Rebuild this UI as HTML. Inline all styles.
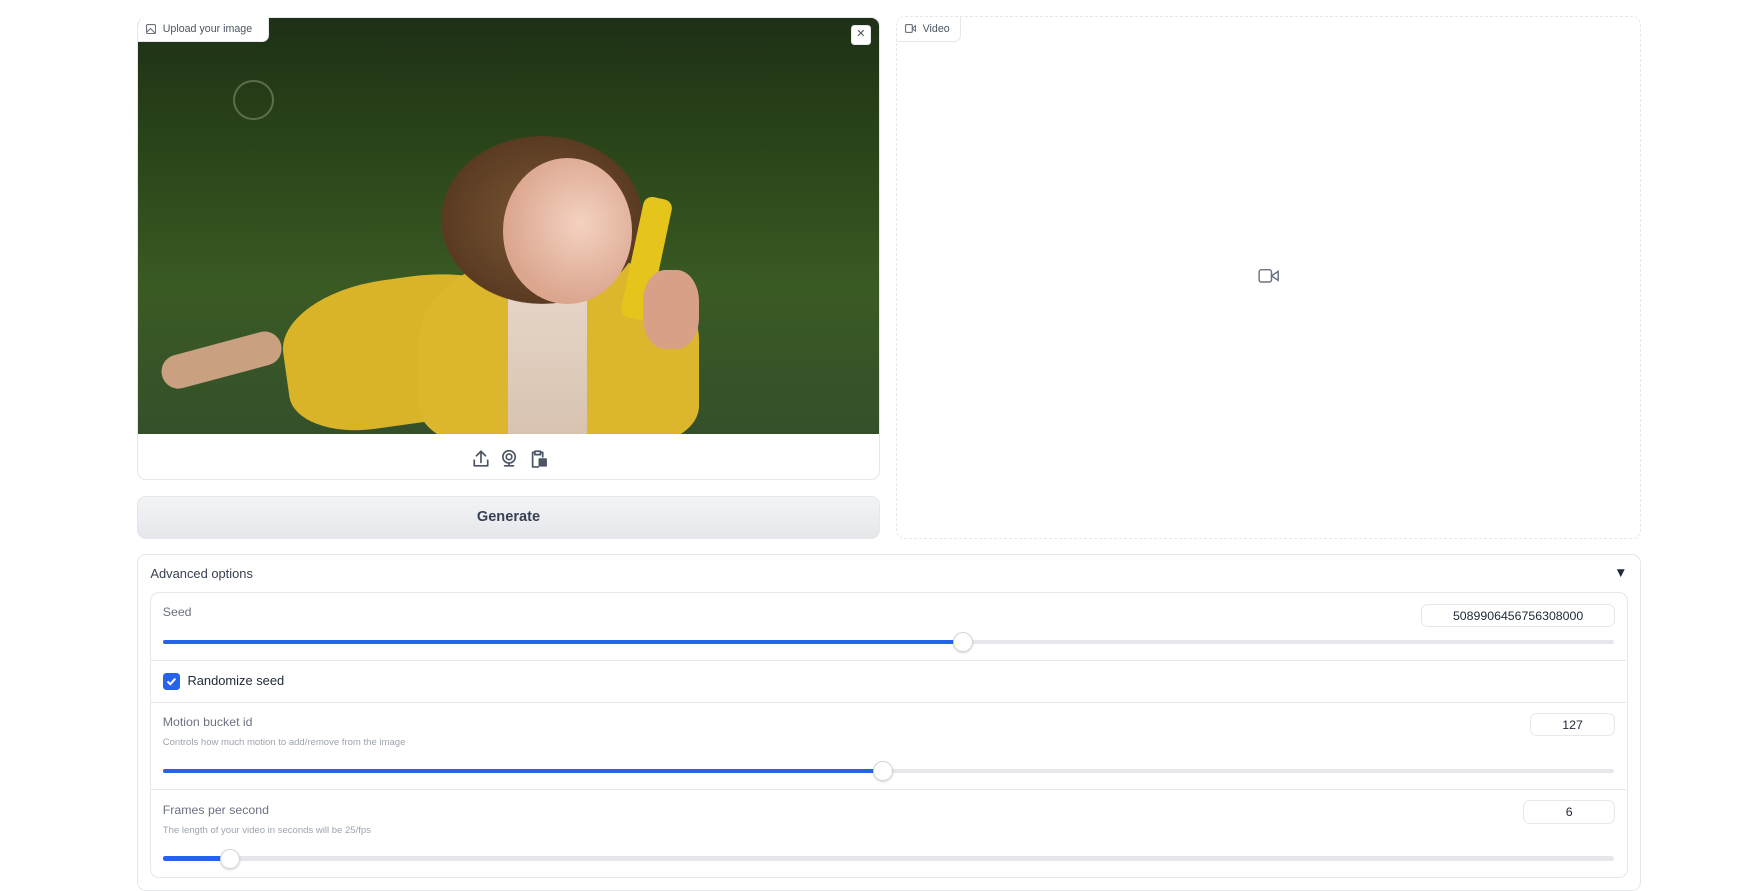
<!DOCTYPE html>
<html><head><meta charset="utf-8"><style>
*{box-sizing:border-box;margin:0;padding:0}
html,body{width:1760px;height:880px;overflow:hidden;background:#fff}
#w{position:absolute;left:0;top:0;width:1568px;height:784px;zoom:1.12245;font-family:"Liberation Sans",sans-serif;color:#374151}
.abs{position:absolute}
.lbl{position:absolute;background:#fff;border:1px solid #e5e7eb;border-top:none;border-left:none;border-radius:0 0 6px 0;font-size:9.5px;color:#4b5563;display:flex;align-items:center;gap:6px;padding:0 7px;white-space:nowrap}
.track{position:absolute;height:4px;background:#e5e7eb;border-radius:2px;left:145px;width:1293px}
.fill{position:absolute;left:0;top:0;height:4px;background:#2563eb;border-radius:2px}
.thumb{position:absolute;top:-7px;width:18px;height:18px;border-radius:50%;background:#fff;border:1px solid #d1d5db;box-shadow:0 1px 2px rgba(0,0,0,.15)}
.num{position:absolute;border:1px solid #e5e7eb;border-radius:6px;font-size:11px;color:#1f2937;display:flex;align-items:center;justify-content:center;height:21px}
.t{position:absolute;font-size:11px;color:#6b7280}
.d{position:absolute;font-size:8.5px;color:#9ca3af}
.sep{position:absolute;left:134px;width:1315px;height:1px;background:#e5e7eb}
</style></head><body><div id="w">
<div class="abs" style="left:122px;top:15px;width:662px;height:413px;border:1px solid #e5e7eb;border-radius:8px;overflow:hidden">
 <div class="abs" style="left:0;top:0;width:661px;height:371px;background:linear-gradient(#1e3016 0%,#2a4419 30%,#3a5a24 65%,#34502a 100%);overflow:hidden">
  <div class="abs" style="left:130px;top:230px;width:240px;height:130px;border-radius:40% 50% 30% 30%;background:#d9b328;transform:rotate(-8deg)"></div>
  <div class="abs" style="left:250px;top:210px;width:250px;height:170px;border-radius:45% 45% 20% 20%;background:#dcb62c"></div>
  <div class="abs" style="left:20px;top:290px;width:110px;height:30px;border-radius:15px;background:#c9a080;transform:rotate(-15deg)"></div>
  <div class="abs" style="left:330px;top:240px;width:70px;height:131px;background:linear-gradient(#e6d6c8,#d8c3b0)"></div>
  <div class="abs" style="left:270px;top:105px;width:180px;height:150px;border-radius:50%;background:radial-gradient(ellipse at 50% 50%,#7a5535,#5a3b22 70%,transparent 72%)"></div>
  <div class="abs" style="left:325px;top:125px;width:115px;height:130px;border-radius:50%;background:radial-gradient(ellipse at 60% 45%,#f3d2c0,#dba58e 70%)"></div>
  <div class="abs" style="left:440px;top:160px;width:26px;height:110px;border-radius:8px;background:#e5c51c;transform:rotate(12deg)"></div>
  <div class="abs" style="left:450px;top:225px;width:50px;height:70px;border-radius:40%;background:#d9a088"></div>
  <div class="abs" style="left:85px;top:55px;width:36px;height:36px;border-radius:50%;border:2px solid rgba(200,200,170,.35)"></div>
 </div>
 <div class="abs" style="left:298px;top:384px">
  <svg width="75" height="18" viewBox="0 0 75 18" fill="none" stroke="#4b5563" stroke-width="1.5" stroke-linecap="round" stroke-linejoin="round">
   <path d="M2 10v5h12v-5M8 2v10M4 6l4-4 4 4"/>
   <circle cx="33" cy="7" r="5.5"/><circle cx="33" cy="7" r="2.5"/><path d="M29 15h8M33 12.5v2.5"/>
   <path d="M56 3h-2v13h5M61 3h2v4M56 2h5v3h-5z"/><rect x="60" y="9" width="6" height="6" fill="#4b5563"/>
  </svg>
 </div>
</div>
<div class="lbl" style="left:123px;top:15px;height:22px;width:117px;border-radius:8px 0 6px 0"><svg width="9" height="9" viewBox="0 0 9 9" fill="none" stroke="#6b7280"><rect x=".5" y=".5" width="8" height="8" rx="1"/><path d="M1 7l3-3 4 4"/></svg>Upload your image</div>
<div class="abs" style="left:758px;top:22px;width:18px;height:18px;background:#fff;border-radius:3px;border:1px solid #e5e7eb;font-size:10px;text-align:center;line-height:16px;color:#4b5563">✕</div>
<div class="abs" style="left:122px;top:442px;width:662px;height:38px;border-radius:8px;background:linear-gradient(#f3f4f6,#e5e7eb);border:1px solid #e5e7eb;font-size:13px;font-weight:bold;color:#374151;display:flex;align-items:center;justify-content:center">Generate</div>
<div class="abs" style="left:798px;top:14px;width:664px;height:466px;border:1px dashed #e5e7eb;border-radius:8px"></div>
<div class="lbl" style="left:799px;top:15px;height:22px;width:57px;border-radius:8px 0 6px 0"><svg width="10" height="8" viewBox="0 0 10 8" fill="none" stroke="#6b7280"><rect x=".5" y=".5" width="6" height="7" rx="1"/><path d="M6.5 4l3-2.5v5z"/></svg>Video</div>
<svg class="abs" style="left:1121px;top:239px" width="19" height="14" viewBox="0 0 19 14" fill="none" stroke="#6b7280" stroke-width="1.3"><rect x="1" y="1.5" width="11" height="11" rx="2"/><path d="M12 7l6-4v8z"/></svg>
<div class="abs" style="left:122px;top:494px;width:1340px;height:300px;border:1px solid #e5e7eb;border-radius:8px"></div>
<div class="abs" style="left:134px;top:504px;font-size:11.5px;color:#374151">Advanced options</div>
<div class="abs" style="left:1438px;top:503px;font-size:12px;color:#1f2937">▼</div>
<div class="abs" style="left:134px;top:527px;width:1316px;height:255px;border:1px solid #e5e7eb;border-radius:8px"></div>
<div class="t" style="left:145px;top:539px">Seed</div>
<div class="num" style="left:1266px;top:538px;width:173px">5089906456756308000</div>
<div class="track" style="top:570px"><div class="fill" style="width:713px"></div><div class="thumb" style="left:704px"></div></div>
<div class="sep" style="top:588px"></div>
<div class="abs" style="left:145px;top:600px;width:15px;height:15px;border-radius:3px;background:#2563eb"><svg width="15" height="15" viewBox="0 0 15 15"><path d="M4 7.5l2.5 2.5 4.5-5" stroke="#fff" stroke-width="1.8" fill="none"/></svg></div>
<div class="abs" style="left:167px;top:600px;font-size:11.5px;color:#1f2937">Randomize seed</div>
<div class="sep" style="top:625px"></div>
<div class="t" style="left:145px;top:637px">Motion bucket id</div>
<div class="d" style="left:145px;top:657px">Controls how much motion to add/remove from the image</div>
<div class="num" style="left:1363px;top:635px;width:76px">127</div>
<div class="track" style="top:685px"><div class="fill" style="width:642px"></div><div class="thumb" style="left:633px"></div></div>
<div class="sep" style="top:703px"></div>
<div class="t" style="left:145px;top:715px">Frames per second</div>
<div class="d" style="left:145px;top:735px">The length of your video in seconds will be 25/fps</div>
<div class="num" style="left:1357px;top:713px;width:82px">6</div>
<div class="track" style="top:763px"><div class="fill" style="width:60px"></div><div class="thumb" style="left:51px"></div></div>
</div></body></html>
